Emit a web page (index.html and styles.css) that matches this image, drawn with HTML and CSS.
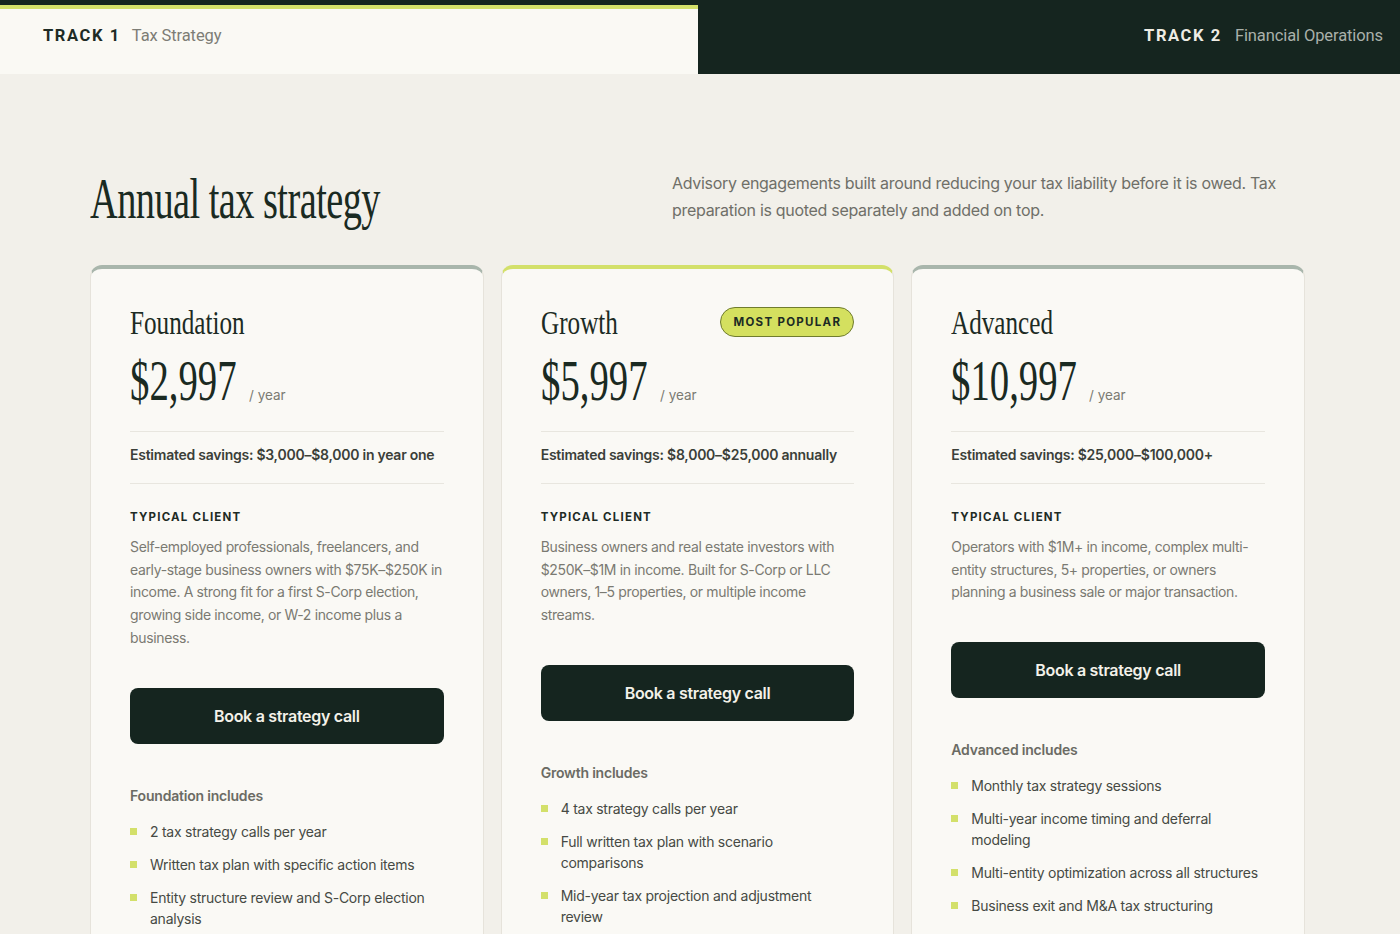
FILE: index.html
```html
<!DOCTYPE html>
<html lang="en">
<head>
<meta charset="utf-8">
<title>Annual tax strategy</title>
<link rel="stylesheet" href="styles.css">
</head>
<body>
<header class="tracks">
  <div class="track track-active">
    <span class="track-num">TRACK 1</span>
    <span class="track-name">Tax Strategy</span>
  </div>
  <div class="track track-dark">
    <span class="track-num">TRACK 2</span>
    <span class="track-name">Financial Operations</span>
  </div>
</header>

<main class="page">
  <section class="intro">
    <h1 class="headline"><span class="serif-cond">Annual tax strategy</span></h1>
    <p class="lede">Advisory engagements built around reducing your tax liability before it is owed. Tax preparation is quoted separately and added on top.</p>
  </section>

  <section class="cards">
    <article class="card">
      <div class="card-head">
        <h2 class="plan"><span class="serif-cond">Foundation</span></h2>
      </div>
      <div class="price-row">
        <span class="price">$2,997</span>
        <span class="per">/ year</span>
      </div>
      <div class="savings">Estimated savings: $3,000–$8,000 in year one</div>
      <h3 class="label">TYPICAL CLIENT</h3>
      <p class="desc">Self-employed professionals, freelancers, and early-stage business owners with $75K–$250K in income. A strong fit for a first S-Corp election, growing side income, or W-2 income plus a business.</p>
      <a class="btn" href="#">Book a strategy call</a>
      <h4 class="inc">Foundation includes</h4>
      <ul class="feats">
        <li>2 tax strategy calls per year</li>
        <li>Written tax plan with specific action items</li>
        <li>Entity structure review and S-Corp election analysis</li>
      </ul>
    </article>

    <article class="card card-featured">
      <div class="card-head">
        <h2 class="plan"><span class="serif-cond">Growth</span></h2>
        <span class="badge">MOST POPULAR</span>
      </div>
      <div class="price-row">
        <span class="price">$5,997</span>
        <span class="per">/ year</span>
      </div>
      <div class="savings">Estimated savings: $8,000–$25,000 annually</div>
      <h3 class="label">TYPICAL CLIENT</h3>
      <p class="desc">Business owners and real estate investors with $250K–$1M in income. Built for S-Corp or LLC owners, 1–5 properties, or multiple income streams.</p>
      <a class="btn" href="#">Book a strategy call</a>
      <h4 class="inc">Growth includes</h4>
      <ul class="feats">
        <li>4 tax strategy calls per year</li>
        <li>Full written tax plan with scenario comparisons</li>
        <li>Mid-year tax projection and adjustment review</li>
      </ul>
    </article>

    <article class="card">
      <div class="card-head">
        <h2 class="plan"><span class="serif-cond">Advanced</span></h2>
      </div>
      <div class="price-row">
        <span class="price">$10,997</span>
        <span class="per">/ year</span>
      </div>
      <div class="savings">Estimated savings: $25,000–$100,000+</div>
      <h3 class="label">TYPICAL CLIENT</h3>
      <p class="desc">Operators with $1M+ in income, complex multi-entity structures, 5+ properties, or owners planning a business sale or major transaction.</p>
      <a class="btn" href="#">Book a strategy call</a>
      <h4 class="inc">Advanced includes</h4>
      <ul class="feats">
        <li>Monthly tax strategy sessions</li>
        <li>Multi-year income timing and deferral modeling</li>
        <li>Multi-entity optimization across all structures</li>
        <li>Business exit and M&amp;A tax structuring</li>
      </ul>
    </article>
  </section>
</main>
</body>
</html>
```

FILE: styles.css
```css
* { box-sizing: border-box; }

html, body {
  margin: 0;
  padding: 0;
}

body {
  background: #f2f0ea;
  font-family: Inter, "Noto Sans", "Liberation Sans", sans-serif;
  color: #1b2a23;
  height: 934px;
  overflow: hidden;
}

/* ---------- track header ---------- */
.tracks {
  display: flex;
  height: 74px;
  background: #15251f;
  padding-top: 5px;
}

.track {
  display: flex;
  align-items: center;
  gap: 11px;
  flex: 1;
}

.track-active {
  flex: 0 0 698px;
  background: #faf9f4;
  border-top: 4px solid #d3e06a;
  padding-left: 43px;
  padding-bottom: 12px;
}

.track-dark {
  justify-content: flex-end;
  padding-right: 17px;
  margin-top: -5px;
  padding-bottom: 4px;
  gap: 13px;
}

.track-num {
  font-family: Roboto, "Liberation Sans", sans-serif;
  font-weight: 700;
  font-size: 16.5px;
  letter-spacing: 1.6px;
}

.track-name {
  font-family: Roboto, "Liberation Sans", sans-serif;
  font-size: 16.5px;
  letter-spacing: -0.1px;
}

.track-active .track-num { color: #1e2b25; }
.track-active .track-name { color: #7d7d76; }
.track-dark .track-num { color: #eeece4; }
.track-dark .track-name { color: #a9b0aa; }

/* ---------- condensed serif helper ---------- */
.serif-cond {
  display: inline-block;
  font-family: "Liberation Serif", "Times New Roman", serif;
  font-weight: 400;
  transform: scaleX(0.7);
  transform-origin: left center;
  white-space: nowrap;
}

/* ---------- intro ---------- */
.page {
  padding: 0 95px 0 90px;
}

.intro {
  display: flex;
  justify-content: space-between;
  align-items: flex-start;
  padding-top: 96px;
  height: 191px;
}

.headline {
  margin: 0;
  font-size: 56px;
  line-height: 1;
  font-weight: 400;
  color: #1a2a22;
  letter-spacing: -0.8px;
}

.headline .serif-cond {
  transform: scaleX(0.685);
}

.lede {
  margin: 0 3px 0 0;
  width: 630px;
  font-size: 16px;
  line-height: 27px;
  color: #6f6f68;
  letter-spacing: -0.3px;
}

/* ---------- cards ---------- */
.cards {
  display: grid;
  grid-template-columns: repeat(3, 1fr);
  gap: 17px;
  align-items: start;
}

.card {
  background: #faf9f5;
  border: 1px solid #e6e3db;
  border-top: 4px solid #a9b6ac;
  border-radius: 12px;
  padding: 33px 39px 40px;
  min-height: 700px;
}

.card-featured {
  border-top-color: #d3e06a;
}

.card-head {
  display: flex;
  justify-content: space-between;
  align-items: center;
  height: 40px;
}

.plan {
  margin: 0;
  font-size: 34px;
  line-height: 40px;
  font-weight: 400;
  color: #1c2b24;
}

.plan .serif-cond {
  transform: scaleX(0.74);
}

.badge {
  display: inline-block;
  background: #d4e05f;
  border: 1px solid #6f7c2e;
  border-radius: 999px;
  padding: 0 12px;
  height: 30px;
  line-height: 28px;
  font-size: 11.5px;
  font-weight: 700;
  letter-spacing: 1.3px;
  color: #1c2b24;
}

.price-row {
  display: flex;
  align-items: baseline;
  margin-top: 9px;
  height: 60px;
  transform: scaleX(0.68);
  transform-origin: left center;
  white-space: nowrap;
}

.price {
  font-family: "Liberation Serif", "Times New Roman", serif;
  font-size: 57px;
  line-height: 60px;
  color: #1a2a22;
}

.per {
  font-size: 13.5px;
  color: #7b7b73;
  margin-left: 18px;
  transform: scaleX(1.4706);
  transform-origin: left center;
}

.savings {
  margin-top: 20px;
  border-top: 1px solid #e8e6df;
  border-bottom: 1px solid #e8e6df;
  padding: 11px 0 16px;
  font-size: 14px;
  line-height: 24px;
  font-weight: 600;
  color: #3b3f39;
  letter-spacing: -0.25px;
}

.label {
  margin: 24px 0 0;
  font-size: 11.5px;
  line-height: 18px;
  font-weight: 700;
  letter-spacing: 1.2px;
  color: #1e2b25;
}

.desc {
  margin: 10px 0 0;
  font-size: 14px;
  line-height: 22.7px;
  color: #7a7a72;
  letter-spacing: -0.35px;
}

.btn {
  display: flex;
  align-items: center;
  justify-content: center;
  height: 56px;
  margin-top: 38px;
  background: #15251f;
  border-radius: 8px;
  color: #f3f1e9;
  text-decoration: none;
  font-size: 16px;
  font-weight: 600;
  letter-spacing: -0.3px;
}

.inc {
  margin: 42px 0 0;
  font-size: 14px;
  line-height: 20px;
  font-weight: 600;
  color: #6b6b64;
  letter-spacing: -0.2px;
}

.feats {
  list-style: none;
  margin: 15px 0 0;
  padding: 0;
  display: flex;
  flex-direction: column;
  gap: 12px;
}

.feats li {
  position: relative;
  padding-left: 20px;
  font-size: 14px;
  line-height: 21px;
  color: #464a44;
  letter-spacing: -0.25px;
}

.feats li::before {
  content: "";
  position: absolute;
  left: 0;
  top: 7px;
  width: 7px;
  height: 7px;
  background: #d3e06a;
}
```
